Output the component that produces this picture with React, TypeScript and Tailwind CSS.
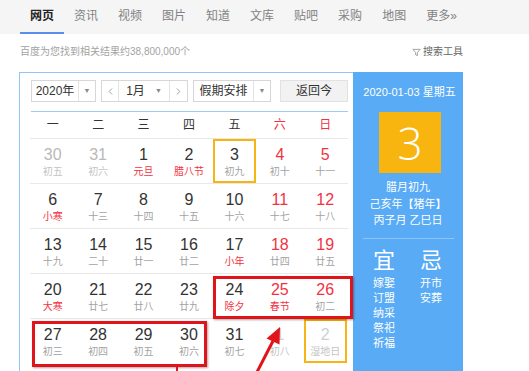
import { ChevronLeft, ChevronRight } from 'lucide-react';

type Day = {
  n: string;
  l: string;
  nc?: 'dim' | 'red' | 'pale';
  lc?: 'red' | 'pale';
  box?: boolean;
};

const tabs = ['网页', '资讯', '视频', '图片', '知道', '文库', '贴吧', '采购', '地图', '更多»'];
const weekdays = ['一', '二', '三', '四', '五', '六', '日'];

const weeks: Day[][] = [
  [
    { n: '30', l: '初五', nc: 'dim', lc: 'pale' },
    { n: '31', l: '初六', nc: 'dim', lc: 'pale' },
    { n: '1', l: '元旦', lc: 'red' },
    { n: '2', l: '腊八节', lc: 'red' },
    { n: '3', l: '初九', box: true },
    { n: '4', l: '初十', nc: 'red' },
    { n: '5', l: '十一', nc: 'red' },
  ],
  [
    { n: '6', l: '小寒', lc: 'red' },
    { n: '7', l: '十三' },
    { n: '8', l: '十四' },
    { n: '9', l: '十五' },
    { n: '10', l: '十六' },
    { n: '11', l: '十七', nc: 'red' },
    { n: '12', l: '十八', nc: 'red' },
  ],
  [
    { n: '13', l: '十九' },
    { n: '14', l: '二十' },
    { n: '15', l: '廿一' },
    { n: '16', l: '廿二' },
    { n: '17', l: '小年', lc: 'red' },
    { n: '18', l: '廿四', nc: 'red' },
    { n: '19', l: '廿五', nc: 'red' },
  ],
  [
    { n: '20', l: '大寒', lc: 'red' },
    { n: '21', l: '廿七' },
    { n: '22', l: '廿八' },
    { n: '23', l: '廿九' },
    { n: '24', l: '除夕', lc: 'red' },
    { n: '25', l: '春节', nc: 'red', lc: 'red' },
    { n: '26', l: '初二', nc: 'red' },
  ],
  [
    { n: '27', l: '初三' },
    { n: '28', l: '初四' },
    { n: '29', l: '初五' },
    { n: '30', l: '初六' },
    { n: '31', l: '初七' },
    { n: '1', l: '初八', nc: 'pale', lc: 'pale' },
    { n: '2', l: '湿地日', nc: 'pale', lc: 'pale', box: true },
  ],
];

function numColor(c?: Day['nc']) {
  if (c === 'red') return 'text-[#f2323f]';
  if (c === 'dim') return 'text-[#b9b9b9]';
  if (c === 'pale') return 'text-[#cfcfcf]';
  return 'text-[#333]';
}

function lunarColor(c?: Day['lc']) {
  if (c === 'red') return 'text-[#f2323f]';
  if (c === 'pale') return 'text-[#c4c4c4]';
  return 'text-[#a3a3a3]';
}

function Select({ label, width }: { label: string; width: string }) {
  return (
    <div className={`${width} h-[22px] flex border border-[#d7d7d7] bg-white`}>
      <div className="flex-1 flex items-center justify-center text-[12px] text-[#333]">{label}</div>
      <div className="w-[17px] border-l border-[#e3e3e3] flex items-center justify-center text-[7px] text-[#888]">▼</div>
    </div>
  );
}

export default function App() {
  return (
    <div className="relative w-[529px] h-[371px] overflow-hidden bg-white font-['Liberation_Sans','Noto_Sans_CJK_SC',sans-serif]">
      {/* tabs */}
      <nav className="h-[34px] bg-[#f5f5f6] flex pl-[20px]">
        {tabs.map((t, i) => (
          <div
            key={t}
            className={`px-[10px] h-full flex items-center text-[12px] border-b-2 ${
              i === 0 ? 'border-[#5b8def] text-[#222] font-bold' : 'border-transparent text-[#828282]'
            }`}
          >
            {t}
          </div>
        ))}
      </nav>

      {/* result count */}
      <div className="mt-[11px] h-[14px] w-[463px] pl-[20px] flex items-center justify-between text-[10px] leading-[14px]">
        <span className="text-[#a3a3a3]">百度为您找到相关结果约38,800,000个</span>
        <span className="flex items-center gap-[2px] text-[#666]">
          <svg width="9" height="9" viewBox="0 0 10 10" fill="none" stroke="#999" strokeWidth="1">
            <path d="M1 1.5h8L6 5v3.5L4 7.5V5z" />
          </svg>
          搜索工具
        </span>
      </div>

      {/* calendar */}
      <div className="mt-[13px] ml-[19px] w-[444px] flex">
        <div className="w-[334px] h-[320px] border-l border-t border-[#92c5f3] pl-[10px] pr-[5px] pt-[7px]">
          <div className="flex items-center ml-[1px]">
            <Select label="2020年" width="w-[65px]" />
            <div className="ml-[5px] w-[87px] h-[22px] flex border border-[#d7d7d7]">
              <div className="w-[17px] border-r border-[#e3e3e3] flex items-center justify-center text-[#777]">
                <ChevronLeft size={11} strokeWidth={1.5} />
              </div>
              <div className="flex-1 flex items-center justify-center gap-[10px] text-[12px] text-[#333]">
                <span>1月</span>
                <span className="text-[7px] text-[#888]">▼</span>
              </div>
              <div className="w-[18px] border-l border-[#e3e3e3] flex items-center justify-center text-[#777]">
                <ChevronRight size={11} strokeWidth={1.5} />
              </div>
            </div>
            <div className="ml-[5px]">
              <Select label="假期安排" width="w-[78px]" />
            </div>
            <div className="ml-[9px] w-[68px] h-[22px] border border-[#e2e2e2] bg-[#f2f2f2] flex items-center justify-center text-[12px] text-[#333]">
              返回今
            </div>
          </div>

          <div className="mt-[9px] ml-[1px] h-[1px] bg-[#9ccbf5]" />

          <div className="grid grid-cols-7 w-[318px] h-[26px] items-center text-[12px]">
            {weekdays.map((w, i) => (
              <div key={w} className={`text-center ${i >= 5 ? 'text-[#f2323f]' : 'text-[#333]'}`}>
                {w}
              </div>
            ))}
          </div>

          {weeks.map((week, r) => (
            <div key={r} className="grid grid-cols-7 w-[318px] h-[45px] border-t border-[#e8e8e8]">
              {week.map((d, c) => (
                <div key={c} className="flex justify-center">
                  <div
                    className={`w-[43px] h-[44px] border-2 flex flex-col items-center pt-[5px] ${
                      d.box ? 'border-[#f6b514]' : 'border-transparent'
                    }`}
                  >
                    <span className={`text-[16px] leading-[18px] ${numColor(d.nc)}`}>{d.n}</span>
                    <span className={`mt-[1px] text-[10px] leading-[14px] ${lunarColor(d.lc)}`}>{d.l}</span>
                  </div>
                </div>
              ))}
            </div>
          ))}
        </div>

        {/* side panel */}
        <div className="w-[110px] h-[320px] bg-[#59abf6] flex flex-col items-center text-white pt-[13px]">
          <div className="text-[11px] leading-[14px] pl-[3px]">2020-01-03 星期五</div>
          <div className="mt-[13px] ml-[4px] w-[62px] h-[61px] bg-[#f9b50f] flex items-center justify-center font-['Open_Sans',sans-serif] text-[44px] font-light leading-none">
            3
          </div>
          <div className="mt-[6px] text-[11px] leading-[16.5px] text-center">
            <div>腊月初九</div>
            <div>己亥年【猪年】</div>
            <div>丙子月 乙巳日</div>
          </div>
          <div className="mt-[9px] w-[91px] h-px bg-white/30" />
          <div className="mt-[9px] w-[92px] flex justify-between pl-[11px] pr-[12px]">
            <div className="flex flex-col items-center">
              <span className="text-[22px] leading-[26px]">宜</span>
              <div className="mt-[2px] text-[11px] leading-[15px] flex flex-col items-center">
                <span>嫁娶</span>
                <span>订盟</span>
                <span>纳采</span>
                <span>祭祀</span>
                <span>祈福</span>
              </div>
            </div>
            <div className="flex flex-col items-center">
              <span className="text-[22px] leading-[26px]">忌</span>
              <div className="mt-[2px] text-[11px] leading-[15px] flex flex-col items-center">
                <span>开市</span>
                <span>安葬</span>
              </div>
            </div>
          </div>
        </div>
      </div>

      {/* annotations */}
      <div className="absolute left-[213px] top-[276px] w-[140px] h-[43px] border-[3px] border-[#e1141c] shadow-[1px_1px_2px_rgba(0,0,0,0.35)]" />
      <div className="absolute left-[32px] top-[321px] w-[175px] h-[46px] border-[3px] border-[#e1141c] shadow-[1px_1px_2px_rgba(0,0,0,0.35)]" />
      <svg className="absolute left-0 top-0" width="529" height="371" viewBox="0 0 529 371">
        <line x1="256" y1="374" x2="273" y2="341" stroke="#e1141c" strokeWidth="3" />
        <polygon points="280,327 266.5,338.5 279.5,344.5" fill="#e1141c" />
        <line x1="177" y1="367" x2="177" y2="371" stroke="#e1141c" strokeWidth="2" />
      </svg>
    </div>
  );
}
